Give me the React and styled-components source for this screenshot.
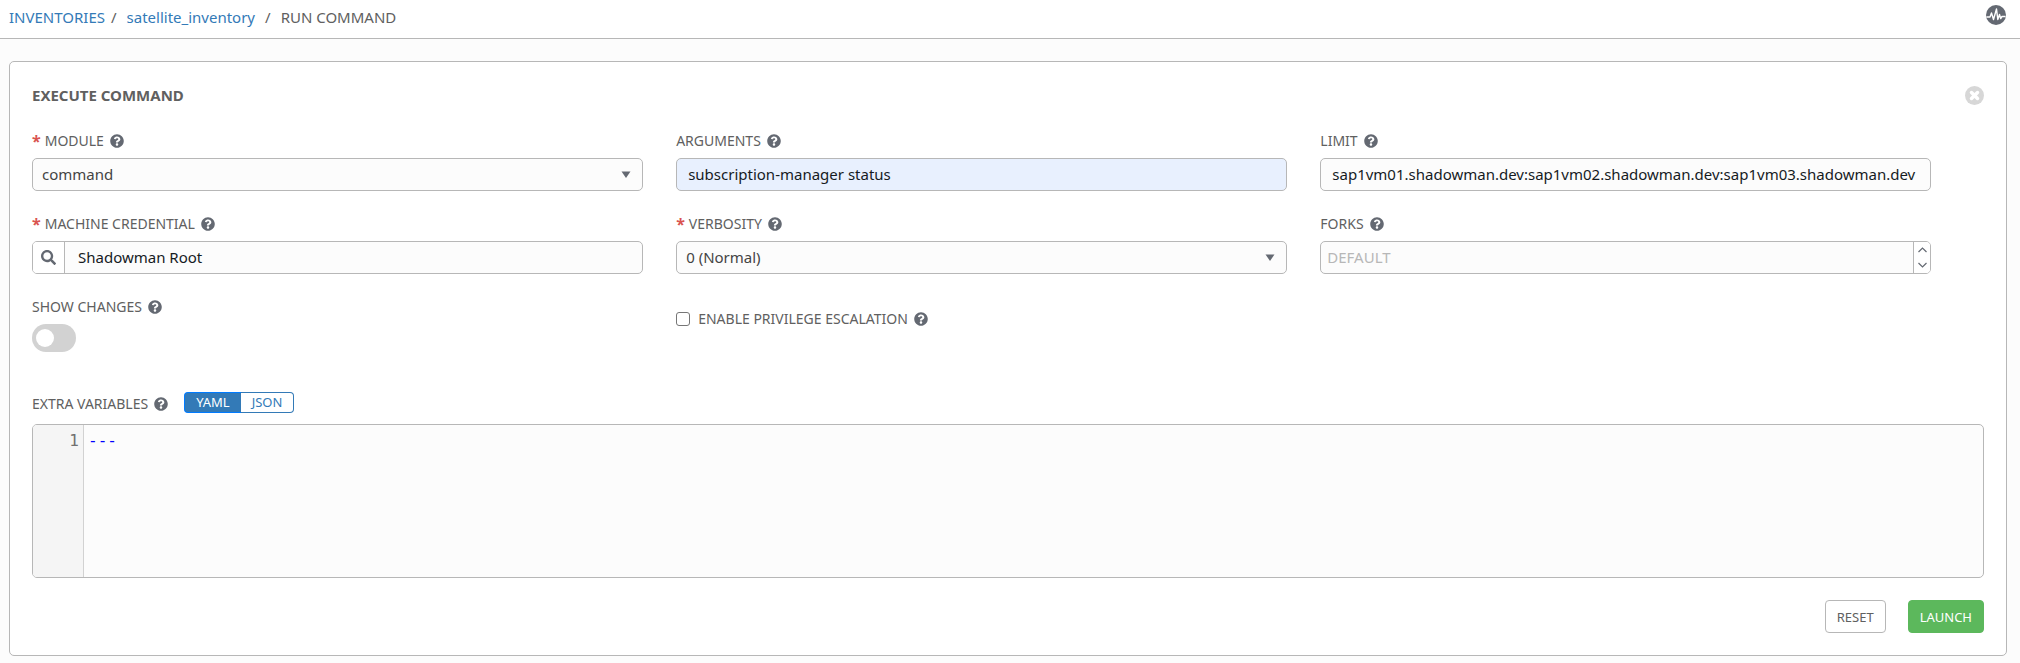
import React, { useState } from "react";
import styled, { createGlobalStyle, css } from "styled-components";
import { FaQuestionCircle, FaSearch } from "react-icons/fa";

const GlobalStyle = createGlobalStyle`
  *, *::before, *::after { box-sizing: border-box; }
  body {
    margin: 0;
    background: #fcfcfc;
    color: #606060;
    font-family: "Noto Sans", "Open Sans", sans-serif;
    font-size: 14px;
    line-height: 20px;
  }
  button, input, select, textarea { font: inherit; color: inherit; margin: 0; }
`;

const TopBar = styled.header`
  display: flex;
  justify-content: space-between;
  align-items: flex-start;
  height: 39px;
  padding: 5px 14px 0 9px;
  background: #fff;
  border-bottom: 1px solid #b7b7b7;
`;

const Crumbs = styled.ol`
  display: flex;
  margin: 0;
  padding: 2px 0 0;
  list-style: none;
  font-size: 15px;
`;

const Crumb = styled.li`
  &:not(:first-child)::before {
    content: "/";
    padding: 0 10px 0 ${(p) => (p.$wide ? "10px" : "6px")};
  }
`;

const CrumbLink = styled.a`
  color: #337ab7;
  text-decoration: none;
`;

const IconButton = styled.button`
  display: flex;
  padding: 0;
  border: 0;
  background: none;
  cursor: pointer;
`;

const Card = styled.main`
  margin: 22px 13px 7px 9px;
  padding: 23px 22px 22px 22px;
  background: #fff;
  border: 1px solid #b7b7b7;
  border-radius: 5px;
`;

const CardHead = styled.div`
  display: flex;
  justify-content: space-between;
  align-items: center;
  padding-bottom: 26px;
`;

const Title = styled.h1`
  margin: 0;
  font-size: 15px;
  line-height: 20px;
  font-weight: 700;
`;

const FieldGrid = styled.div`
  display: grid;
  grid-template-columns: repeat(3, 33%);
  row-gap: 23px;
`;

const Field = styled.div`
  min-width: 0;
  padding-right: 33px;
`;

const LabelRow = styled.div`
  display: flex;
  align-items: center;
  gap: 6px;
  padding-bottom: 7px;
`;

const Label = styled.label`
  display: flex;
  gap: 4px;
  line-height: 20px;
`;

const Required = styled.span`
  color: #d9534f;
  font-size: 16px;
  font-weight: 700;
`;

const Help = styled(FaQuestionCircle)`
  display: block;
  width: 14px;
  height: 14px;
  color: #646972;
`;

const box = css`
  width: 100%;
  height: 33px;
  background: #fcfcfc;
  border: 1px solid #b7b7b7;
  border-radius: 5px;
  font-size: 15px;
`;

const TextInput = styled.input`
  ${box}
  padding: 0 11px 2px;
  color: #161b1f;
  background: ${(p) => (p.$filled ? "#e8f0fe" : "#fcfcfc")};
`;

const SelectWrap = styled.div`
  display: grid;
  align-items: center;
  & > * { grid-area: 1 / 1; }
`;

const Select = styled.select`
  ${box}
  appearance: none;
  padding: 0 32px 2px 9px;
  color: #444;
`;

const Caret = styled.svg`
  justify-self: end;
  margin-right: 12px;
  pointer-events: none;
`;

const Group = styled.div`
  ${box}
  display: flex;
  overflow: hidden;
`;

const GroupInput = styled.input`
  flex: 1;
  min-width: 0;
  padding: 0 ${(p) => p.$pad} 2px;
  border: 0;
  background: transparent;
  color: #161b1f;
  &::placeholder { color: #b7b7b7; opacity: 1; }
`;

const LookupButton = styled(IconButton)`
  width: 32px;
  align-items: center;
  justify-content: center;
  background: #fff;
  border-right: 1px solid #b7b7b7;
  color: #646972;
`;

const Stepper = styled.div`
  display: flex;
  flex-direction: column;
  width: 17px;
  border-left: 1px solid #b7b7b7;
  background: #fff;
`;

const StepButton = styled(IconButton)`
  flex: 1;
  align-items: center;
  justify-content: center;
`;

const Switch = styled.input`
  appearance: none;
  display: block;
  width: 44px;
  height: 28px;
  padding: 5px 4px;
  border-radius: 14px;
  background: #d2d2d2;
  &::before {
    content: "";
    display: block;
    width: 18px;
    height: 18px;
    border-radius: 50%;
    background: #fff;
  }
  &:checked { background: #337ab7; }
  &:checked::before { margin-left: auto; }
`;

const CheckRow = styled.div`
  display: flex;
  align-items: center;
  gap: 6px;
  height: 44px;
`;

const CheckLabel = styled(Label)`
  padding-left: 2px;
`;

const Checkbox = styled.input`
  appearance: none;
  width: 14px;
  height: 14px;
  background: #fff;
  border: 1px solid #767676;
  border-radius: 3px;
  &:checked { background: #337ab7; }
`;

const VarsHead = styled.div`
  display: flex;
  align-items: flex-start;
  gap: 16px;
  padding-top: 40px;
`;

const VarsLabel = styled(LabelRow)`
  padding: 2px 0 10px;
`;

const Toggle = styled.div`
  display: flex;
`;

const ToggleButton = styled.button`
  height: 21px;
  padding: 0 11px;
  border: 1px solid ${(p) => (p.$on ? "#007bff" : "#337ab7")};
  background: ${(p) => (p.$on ? "#337ab7" : "#fff")};
  color: ${(p) => (p.$on ? "#fff" : "#337ab7")};
  font-size: 13px;
  line-height: 19px;
  &:first-child { border-radius: 4px 0 0 4px; border-right: 0; }
  &:last-child { border-radius: 0 4px 4px 0; border-left: 0; }
`;

const Editor = styled.div`
  display: flex;
  height: 154px;
  overflow: hidden;
  background: #fcfcfc;
  border: 1px solid #b7b7b7;
  border-radius: 5px;
  font-size: 16px;
  line-height: 24px;
`;

const Gutter = styled.div`
  width: 51px;
  padding: 4px 4px 0 0;
  background: #f5f5f5;
  border-right: 1px solid #d2d2d2;
  color: #707070;
  text-align: right;
  font-family: "DejaVu Sans Mono", monospace;
`;

const Code = styled.textarea`
  flex: 1;
  padding: 4px;
  border: 0;
  resize: none;
  background: transparent;
  color: #00f;
  font-family: "DejaVu Sans Mono", monospace;
`;

const Actions = styled.footer`
  display: flex;
  justify-content: flex-end;
  gap: 22px;
  padding-top: 22px;
`;

const Button = styled.button`
  height: 33px;
  padding: 0 11px;
  border: 1px solid ${(p) => (p.$primary ? "#5cb85c" : "#b7b7b7")};
  border-radius: 4px;
  background: ${(p) => (p.$primary ? "#5cb85c" : "#fff")};
  color: ${(p) => (p.$primary ? "#fff" : "#606060")};
  font-size: 13px;
`;

const ActivityIcon = () => (
  <svg width="20" height="20" viewBox="0 0 20 20" fill="none">
    <circle cx="10" cy="10" r="10" fill="#646972" />
    <path
      d="M0.500 12H4l1.500-4 2 6.500L10.500 4l1.300 10.500 1.700-5 1.200 4 1.300-2h3.500"
      stroke="#fff"
      strokeWidth="1.400"
      strokeLinejoin="round"
    />
  </svg>
);

const CloseIcon = () => (
  <svg width="19" height="19" viewBox="0 0 19 19" fill="none">
    <circle cx="9.500" cy="9.500" r="9.500" fill="#d7d7d7" />
    <path d="M6.500 6.500l6 6M12.500 6.500l-6 6" stroke="#fff" strokeWidth="3.500" strokeLinecap="round" />
  </svg>
);

const DownCaret = () => (
  <Caret width="10" height="7" viewBox="0 0 10 7">
    <path d="M0.500 0.500h9L5 7z" fill="#646972" />
  </Caret>
);

const Chevron = ({ d }) => (
  <svg width="9" height="6" viewBox="0 0 9 6" fill="none">
    <path d={d} stroke="#646972" strokeWidth="1.200" />
  </svg>
);

function FieldLabel({ id, required, children }) {
  return (
    <LabelRow>
      <Label htmlFor={id}>
        {required && <Required>*</Required>}
        {children}
      </Label>
      <Help />
    </LabelRow>
  );
}

export default function App() {
  const [format, setFormat] = useState("YAML");
  const [forks, setForks] = useState("");
  const step = (n) => setForks(String(Math.max(0, Number(forks) + n)));

  return (
    <>
      <GlobalStyle />
      <TopBar>
        <nav aria-label="Breadcrumb">
          <Crumbs>
            <Crumb><CrumbLink href="#inventories">INVENTORIES</CrumbLink></Crumb>
            <Crumb><CrumbLink href="#satellite">satellite_inventory</CrumbLink></Crumb>
            <Crumb $wide>RUN COMMAND</Crumb>
          </Crumbs>
        </nav>
        <IconButton aria-label="Activity stream"><ActivityIcon /></IconButton>
      </TopBar>
      <Card>
        <CardHead>
          <Title>EXECUTE COMMAND</Title>
          <IconButton aria-label="Close"><CloseIcon /></IconButton>
        </CardHead>
        <FieldGrid>
          <Field>
            <FieldLabel id="module" required>MODULE</FieldLabel>
            <SelectWrap>
              <Select id="module"><option>command</option></Select>
              <DownCaret />
            </SelectWrap>
          </Field>
          <Field>
            <FieldLabel id="arguments">ARGUMENTS</FieldLabel>
            <TextInput id="arguments" $filled defaultValue="subscription-manager status" />
          </Field>
          <Field>
            <FieldLabel id="limit">LIMIT</FieldLabel>
            <TextInput
              id="limit"
              defaultValue="sap1vm01.shadowman.dev:sap1vm02.shadowman.dev:sap1vm03.shadowman.dev"
            />
          </Field>
          <Field>
            <FieldLabel id="credential" required>MACHINE CREDENTIAL</FieldLabel>
            <Group>
              <LookupButton aria-label="Look up credential"><FaSearch size={15} /></LookupButton>
              <GroupInput id="credential" $pad="13px" defaultValue="Shadowman Root" />
            </Group>
          </Field>
          <Field>
            <FieldLabel id="verbosity" required>VERBOSITY</FieldLabel>
            <SelectWrap>
              <Select id="verbosity"><option>0 (Normal)</option></Select>
              <DownCaret />
            </SelectWrap>
          </Field>
          <Field>
            <FieldLabel id="forks">FORKS</FieldLabel>
            <Group>
              <GroupInput
                id="forks"
                $pad="6px"
                placeholder="DEFAULT"
                value={forks}
                onChange={(e) => setForks(e.target.value)}
              />
              <Stepper>
                <StepButton aria-label="Increase" onClick={() => step(1)}><Chevron d="M0.500 5L4.500 1l4 4" /></StepButton>
                <StepButton aria-label="Decrease" onClick={() => step(-1)}><Chevron d="M0.500 1l4 4 4-4" /></StepButton>
              </Stepper>
            </Group>
          </Field>
          <Field>
            <FieldLabel id="changes">SHOW CHANGES</FieldLabel>
            <Switch id="changes" type="checkbox" role="switch" />
          </Field>
          <Field>
            <CheckRow>
              <Checkbox id="escalation" type="checkbox" />
              <CheckLabel htmlFor="escalation">ENABLE PRIVILEGE ESCALATION</CheckLabel>
              <Help />
            </CheckRow>
          </Field>
        </FieldGrid>
        <VarsHead>
          <VarsLabel>
            <Label htmlFor="variables">EXTRA VARIABLES</Label>
            <Help />
          </VarsLabel>
          <Toggle>
            {["YAML", "JSON"].map((f) => (
              <ToggleButton key={f} $on={format === f} aria-pressed={format === f} onClick={() => setFormat(f)}>
                {f}
              </ToggleButton>
            ))}
          </Toggle>
        </VarsHead>
        <Editor>
          <Gutter>1</Gutter>
          <Code id="variables" spellCheck={false} defaultValue="---" />
        </Editor>
        <Actions>
          <Button>RESET</Button>
          <Button $primary>LAUNCH</Button>
        </Actions>
      </Card>
    </>
  );
}
